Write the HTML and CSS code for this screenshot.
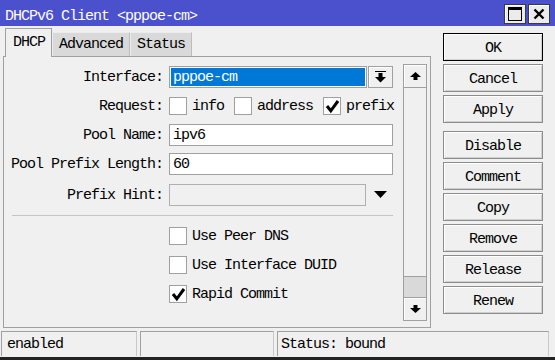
FILE: index.html
```html
<!DOCTYPE html>
<html>
<head>
<meta charset="utf-8">
<link rel="stylesheet" href="styles.css">
</head>
<body>
<div class="window">
  <div class="titlebar">
    <span class="title">DHCPv6 Client &lt;pppoe-cm&gt;</span>
    <div class="tbtns">
      <div class="tbtn"><svg width="14" height="14" viewBox="0 0 14 14"><rect x="0.5" y="0.5" width="13" height="13" fill="none" stroke="#000"/><rect x="0" y="0" width="14" height="3" fill="#000"/></svg></div>
      <div class="tbtn"><svg width="12" height="12" viewBox="0 0 12 12"><path d="M1.5 1.5L10.5 10.5M10.5 1.5L1.5 10.5" stroke="#000" stroke-width="2.4"/></svg></div>
    </div>
  </div>
  <div class="main">
    <div class="left">
      <div class="tabs">
        <div class="tab active">DHCP</div>
        <div class="tab">Advanced</div>
        <div class="tab">Status</div>
      </div>
      <div class="panel">
        <div class="form">
          <div class="row">
            <span class="lbl">Interface:</span>
            <div class="sel">pppoe-cm</div>
            <div class="dd"><svg width="11" height="12" viewBox="0 0 11 12"><rect x="0" y="0" width="11" height="1" fill="#000"/><rect x="3.5" y="2" width="4" height="4" fill="#000"/><polygon points="0,6 11,6 5.5,11.5" fill="#000"/></svg></div>
          </div>
          <div class="row">
            <span class="lbl">Request:</span>
            <span class="cb"></span><span class="cbt">info</span>
            <span class="cb"></span><span class="cbt">address</span>
            <span class="cb on"><svg width="16" height="16" viewBox="0 0 16 16"><path d="M3 8L6.8 12.8L14 3" fill="none" stroke="#000" stroke-width="3"/></svg></span><span class="cbt last">prefix</span>
          </div>
          <div class="row">
            <span class="lbl">Pool Name:</span>
            <div class="field">ipv6</div>
          </div>
          <div class="row">
            <span class="lbl">Pool Prefix Length:</span>
            <div class="field">60</div>
          </div>
          <div class="row hintrow">
            <span class="lbl">Prefix Hint:</span>
            <div class="field off"></div>
            <svg class="tri" width="13" height="7" viewBox="0 0 13 7"><polygon points="0,0 13,0 6.5,7" fill="#000"/></svg>
          </div>
          <div class="sep"></div>
          <div class="row">
            <span class="lbl"></span>
            <span class="cb"></span><span class="cbt">Use Peer DNS</span>
          </div>
          <div class="row">
            <span class="lbl"></span>
            <span class="cb"></span><span class="cbt">Use Interface DUID</span>
          </div>
          <div class="row">
            <span class="lbl"></span>
            <span class="cb on"><svg width="16" height="16" viewBox="0 0 16 16"><path d="M3 8L6.8 12.8L14 3" fill="none" stroke="#000" stroke-width="3"/></svg></span><span class="cbt">Rapid Commit</span>
          </div>
        </div>
        <div class="scroll">
          <div class="sbtn"><svg width="11" height="8" viewBox="0 0 11 8"><polygon points="0,5 5.5,0 11,5" fill="#000"/><rect x="3.5" y="5" width="4" height="3" fill="#000"/></svg></div>
          <div class="track"></div>
          <div class="thumb"></div>
          <div class="sbtn"><svg width="11" height="8" viewBox="0 0 11 8"><rect x="3.5" y="0" width="4" height="3" fill="#000"/><polygon points="0,3 11,3 5.5,8" fill="#000"/></svg></div>
        </div>
      </div>
    </div>
    <div class="buttons">
      <div class="btn def">OK</div>
      <div class="btn">Cancel</div>
      <div class="btn">Apply</div>
      <div class="btn gap">Disable</div>
      <div class="btn">Comment</div>
      <div class="btn">Copy</div>
      <div class="btn">Remove</div>
      <div class="btn">Release</div>
      <div class="btn">Renew</div>
    </div>
  </div>
  <div class="status">
    <div class="cell">enabled</div>
    <div class="cell"></div>
    <div class="cell">Status: bound</div>
  </div>
</div>
</body>
</html>
```

FILE: styles.css
```css
* { box-sizing: border-box; }
html, body { margin: 0; padding: 0; }
body {
  width: 555px;
  height: 360px;
  overflow: hidden;
  background: #f0f0f0;
  font-family: "Liberation Mono", "Cousine", "Courier New", monospace;
  font-size: 15px;
  letter-spacing: -1px;
  color: #000;
}
.window {
  width: 555px;
  height: 360px;
  display: flex;
  flex-direction: column;
  border-bottom: 3px solid #222;
  overflow: hidden;
}
.titlebar {
  height: 26px;
  flex: none;
  background: #4b50cd;
  color: #fff;
  display: flex;
  justify-content: space-between;
  align-items: flex-start;
  padding: 0 5px 0 5px;
}
.title {
  line-height: 17px;
  padding-top: 8px;
  white-space: pre;
}
.tbtns {
  display: flex;
  gap: 2px;
  margin-top: 4px;
}
.tbtn {
  width: 22px;
  height: 20px;
  background: #ebebeb;
  border: 1px solid #3a3a3a;
  box-shadow: inset 1px 1px 0 #fff;
  display: flex;
  align-items: center;
  justify-content: center;
}
.main {
  display: flex;
  height: 305px;
  flex: none;
}
.left {
  margin-left: 3px;
  width: 428px;
  display: flex;
  flex-direction: column;
}
.tabs {
  display: flex;
  align-items: flex-end;
  margin-top: 2px;
  margin-left: 2px;
  height: 28px;
  position: relative;
  z-index: 1;
}
.tab {
  height: 24px;
  line-height: 24px;
  padding: 0 6px;
  background: #d9d9d9;
  border-top: 1px solid #ececec;
  border-left: 1px solid #ececec;
  border-right: 1px solid #bdbdbd;
}
.tab.active {
  height: 29px;
  line-height: 28px;
  padding-left: 7px;
  margin-bottom: -1px;
  background: #f0f0f0;
  border: 1px solid #a0a0a0;
  border-bottom: none;
}
.panel {
  height: 272px;
  border: 1px solid #a0a0a0;
  display: flex;
}
.form {
  width: 395px;
  padding-top: 5px;
}
.row {
  height: 29px;
  display: flex;
  align-items: center;
}
.hintrow { margin-top: 2px; }
.lbl {
  width: 159px;
  margin-right: 6px;
  text-align: right;
  white-space: pre;
  flex: none;
  padding-top: 2px;
}
.sel {
  width: 198px;
  height: 22px;
  border: 1px solid #a0a0a0;
  background: #0078d7;
  box-shadow: inset 0 0 0 1px #fff;
  color: #fff;
  line-height: 21px;
  padding-left: 3px;
}
.dd {
  width: 25px;
  height: 22px;
  margin-left: 1px;
  border: 1px solid #a0a0a0;
  background: #f0f0f0;
  box-shadow: inset 1px 1px 0 #fff;
  display: flex;
  align-items: center;
  justify-content: center;
}
.field {
  width: 224px;
  height: 22px;
  border: 1px solid #a0a0a0;
  background: #fff;
  line-height: 21px;
  padding-left: 3px;
}
.field.off {
  width: 197px;
  background: #f0f0f0;
  border-color: #b0b0b0;
}
.tri { margin-left: 8px; margin-top: -1px; }
.cb {
  width: 18px;
  height: 18px;
  border: 1px solid #a0a0a0;
  background: #fff;
  flex: none;
  display: flex;
  align-items: center;
  justify-content: center;
}
.cbt {
  margin-left: 5px;
  margin-right: 10px;
  white-space: pre;
  padding-top: 2px;
}
.cbt.last { margin-right: 0; }
.sep {
  margin: 6px 0 5px 8px;
  width: 381px;
  height: 1px;
  background: #c4c4c4;
}
.scroll {
  margin-top: 7px;
  margin-left: 4px;
  width: 24px;
  height: 257px;
  display: flex;
  flex-direction: column;
}
.sbtn {
  height: 24px;
  flex: none;
  border: 1px solid #a0a0a0;
  background: #f0f0f0;
  box-shadow: inset 1px 1px 0 #fff;
  display: flex;
  align-items: center;
  justify-content: center;
}
.track {
  flex: 1;
  border-left: 1px solid #a0a0a0;
  border-right: 1px solid #a0a0a0;
  background: #f0f0f0;
}
.thumb {
  height: 21px;
  flex: none;
  border: 1px solid #a0a0a0;
  border-bottom: none;
  background: #d9d9d9;
}
.buttons {
  margin-left: 12px;
  margin-top: 7px;
  width: 100px;
  display: flex;
  flex-direction: column;
  gap: 3px;
}
.btn {
  height: 28px;
  border: 1px solid #8c8c8c;
  box-shadow: inset 1px 1px 0 #fff, inset -1px -1px 0 #d0d0d0;
  background: #f0f0f0;
  text-align: center;
  line-height: 27px;
  padding-top: 1px;
}
.btn.def { border-color: #000; }
.btn.gap { margin-top: 5px; }
.status {
  margin-top: 0;
  margin-left: 1px;
  height: 23px;
  flex: none;
  display: grid;
  grid-template-columns: 136px 134px 272px;
  gap: 3px;
}
.cell {
  border-top: 1px solid #a0a0a0;
  border-left: 1px solid #a0a0a0;
  border-right: 1px solid #c8c8c8;
  line-height: 22px;
  padding-top: 2px;
  padding-left: 5px;
  white-space: pre;
}
.cell:last-child { padding-left: 3px; }
```
